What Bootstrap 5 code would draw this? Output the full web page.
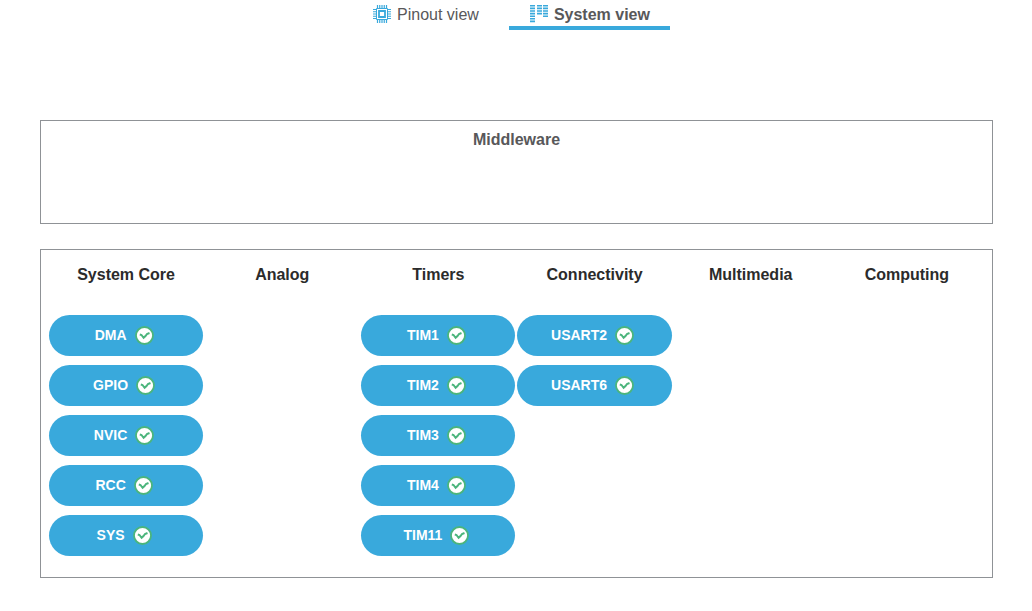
<!DOCTYPE html>
<html lang="en">
<head>
<meta charset="utf-8">
<meta name="viewport" content="width=device-width, initial-scale=1">
<title>System view</title>
<link href="https://cdn.jsdelivr.net/npm/bootstrap@5.3.0/dist/css/bootstrap.min.css" rel="stylesheet">
<style>
  body { font-family: "Liberation Sans", Arial, sans-serif; font-size: 16px; line-height: 20px; color: #2b2b2b; background: #fff; }
  .view-tabs { gap: 10px; padding-right: 10px; }
  .view-tabs .nav-link { display: flex; align-items: center; gap: 5px; height: 30px; padding: 0 20px; color: #58585a; border-bottom: 4px solid transparent; border-radius: 0; }
  .view-tabs .nav-link svg { margin-top: 1px; }
  .view-tabs .nav-link span { padding-top: 4px; }
  .view-tabs .nav-link.active { font-weight: 700; border-color: #39a9dc; }
  .workspace { padding: 90px 39px 33px 40px; }
  .panel { border: 1px solid #8f9296; }
  .panel h2 { margin: 0; font-size: 16px; line-height: 20px; font-weight: 700; text-align: center; }
  .middleware { min-height: 104px; padding-top: 9px; margin-bottom: 25px; color: #58585a; }
  .categories { padding: 15px 7px 21px; }
  .categories h2 { margin-bottom: 30px; }
  .modules { gap: 9px; padding: 0 1px; }
  .module { display: flex; align-items: center; justify-content: center; gap: 8px; width: 100%; height: 41px; padding: 0 4px 0 0; font-size: 14px; line-height: 20px; font-weight: 700; color: #fff; background: #39a9dc; border: 0; border-radius: 21px; }
  .module span { padding-bottom: 2px; }
  .module:hover { color: #fff; background: #2f9bcd; }
</style>
</head>
<body>
<svg class="d-none" aria-hidden="true">
  <symbol id="ok" viewBox="0 0 19 19">
    <circle cx="9.500" cy="9.500" r="8.500" fill="#fff" stroke="#4bb57c" stroke-width="1.800"/>
    <path d="M4.800 8.500L6.500 9L8.600 11.800L10.500 10L12 8L14.500 7" fill="none" stroke="#4bb57c" stroke-width="2"/>
  </symbol>
</svg>
<nav class="nav view-tabs justify-content-center" aria-label="Views">
  <a class="nav-link" href="#pinout">
    <svg width="20" height="20" viewBox="0 0 20 20" fill="none" stroke="#39a9dc" aria-hidden="true">
      <path stroke-width="1.200" d="M5.500 1v3M7.750 1v3M10 1v3M12.250 1v3M14.500 1v3M5.500 16v3M7.750 16v3M10 16v3M12.250 16v3M14.500 16v3M1 5.500h3M1 7.750h3M1 10h3M1 12.250h3M1 14.500h3M16 5.500h3M16 7.750h3M16 10h3M16 12.250h3M16 14.500h3"/>
      <path d="M4.500 4.500h11v11h-11z"/>
      <path d="M7 7h6v6H7z" stroke-width="1.800"/>
    </svg>
    <span>Pinout view</span>
  </a>
  <a class="nav-link active" href="#system" aria-current="page">
    <svg width="20" height="20" viewBox="0 0 20 20" fill="none" stroke="#39a9dc" stroke-width="1.600" aria-hidden="true">
      <path d="M1 1.800h5M8 1.800h5M14 1.800h5M1 4.400h5M8 4.400h5M14 4.400h5M1 7h5M8 7h5M14 7h5M1 9.600h5M8 9.600h5M14 9.600h5M1 12.200h5M14 12.200h5M1 14.800h5M1 17.400h5"/>
    </svg>
    <span>System view</span>
  </a>
</nav>
<main class="workspace" id="system">
  <section class="panel middleware"><h2>Middleware</h2></section>
  <section class="panel categories">
    <div class="row g-0 row-cols-6">
      <div class="col">
        <h2>System Core</h2>
        <div class="modules d-flex flex-column">
          <button type="button" class="btn module"><span>DMA</span><svg width="19" height="19" aria-hidden="true"><use href="#ok"/></svg></button>
          <button type="button" class="btn module"><span>GPIO</span><svg width="19" height="19" aria-hidden="true"><use href="#ok"/></svg></button>
          <button type="button" class="btn module"><span>NVIC</span><svg width="19" height="19" aria-hidden="true"><use href="#ok"/></svg></button>
          <button type="button" class="btn module"><span>RCC</span><svg width="19" height="19" aria-hidden="true"><use href="#ok"/></svg></button>
          <button type="button" class="btn module"><span>SYS</span><svg width="19" height="19" aria-hidden="true"><use href="#ok"/></svg></button>
        </div>
      </div>
      <div class="col"><h2>Analog</h2></div>
      <div class="col">
        <h2>Timers</h2>
        <div class="modules d-flex flex-column">
          <button type="button" class="btn module"><span>TIM1</span><svg width="19" height="19" aria-hidden="true"><use href="#ok"/></svg></button>
          <button type="button" class="btn module"><span>TIM2</span><svg width="19" height="19" aria-hidden="true"><use href="#ok"/></svg></button>
          <button type="button" class="btn module"><span>TIM3</span><svg width="19" height="19" aria-hidden="true"><use href="#ok"/></svg></button>
          <button type="button" class="btn module"><span>TIM4</span><svg width="19" height="19" aria-hidden="true"><use href="#ok"/></svg></button>
          <button type="button" class="btn module"><span>TIM11</span><svg width="19" height="19" aria-hidden="true"><use href="#ok"/></svg></button>
        </div>
      </div>
      <div class="col">
        <h2>Connectivity</h2>
        <div class="modules d-flex flex-column">
          <button type="button" class="btn module"><span>USART2</span><svg width="19" height="19" aria-hidden="true"><use href="#ok"/></svg></button>
          <button type="button" class="btn module"><span>USART6</span><svg width="19" height="19" aria-hidden="true"><use href="#ok"/></svg></button>
        </div>
      </div>
      <div class="col"><h2>Multimedia</h2></div>
      <div class="col"><h2>Computing</h2></div>
    </div>
  </section>
</main>
<script src="https://cdn.jsdelivr.net/npm/bootstrap@5.3.0/dist/js/bootstrap.bundle.min.js"></script>
</body>
</html>
